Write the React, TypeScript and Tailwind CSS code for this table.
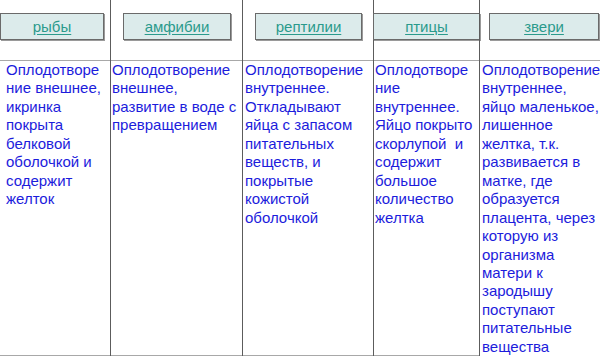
const columns = [
  {
    title: "рыбы",
    width: "w-[110px]",
    box: "ml-0 w-[104px]",
    pad: "pl-[6px]",
    lines: ["Оплодотворе", "ние внешнее,", "икринка", "покрыта", "белковой", "оболочкой и", "содержит", "желток"],
  },
  {
    title: "амфибии",
    width: "w-[132px] border-l",
    box: "ml-[12px] w-[108px]",
    pad: "pl-[1px]",
    lines: ["Оплодотворение", "внешнее,", "развитие в воде с", "превращением"],
  },
  {
    title: "рептилии",
    width: "w-[131px] border-l",
    box: "ml-[12px] w-[107px]",
    pad: "pl-[2px]",
    lines: [
      "Оплодотворение",
      "внутреннее.",
      "Откладывают",
      "яйца с запасом",
      "питательных",
      "веществ, и",
      "покрытые",
      "кожистой",
      "оболочкой",
    ],
  },
  {
    title: "птицы",
    width: "w-[106px] border-l",
    box: "-ml-[1px] w-[107px]",
    pad: "pl-[1px]",
    lines: [
      "Оплодотворе",
      "ние",
      "внутреннее.",
      "Яйцо покрыто",
      "скорлупой\u00a0 и",
      "содержит",
      "большое",
      "количество",
      "желтка",
    ],
  },
  {
    title: "звери",
    width: "w-[121px] border-l",
    box: "ml-[9px] w-[110px]",
    pad: "pl-[2px]",
    lines: [
      "Оплодотворение",
      "внутреннее,",
      "яйцо маленькое,",
      "лишенное",
      "желтка, т.к.",
      "развивается в",
      "матке, где",
      "образуется",
      "плацента, через",
      "которую из",
      "организма",
      "матери к",
      "зародышу",
      "поступают",
      "питательные",
      "вещества",
    ],
  },
];

export default function App() {
  return (
    <div className="flex h-[356px] w-[600px] overflow-hidden bg-white font-['Liberation_Sans',Arial,sans-serif]">
      {columns.map((col) => (
        <div key={col.title} className={`flex h-full shrink-0 flex-col border-[#5c5c5c] ${col.width}`}>
          {/* header cell */}
          <div className="h-[60px] shrink-0 pt-[13px]">
            <div
              className={`flex h-[27px] items-center justify-center border border-[#6a6a6a] bg-[#dcebeb] shadow-[1px_1px_0_0_#9a9a9a] ${col.box}`}
            >
              <span className="text-[15px] leading-none text-[#2a9a8c] underline underline-offset-2">{col.title}</span>
            </div>
          </div>
          {/* body cell */}
          <div className={`flex-1 border-y border-[#a8a8a8] text-[15px] leading-[18.45px] text-[#1c1cdc] ${col.pad}`}>
            {col.lines.map((line, i) => (
              <div key={i} className="whitespace-pre">
                {line}
              </div>
            ))}
          </div>
        </div>
      ))}
    </div>
  );
}
